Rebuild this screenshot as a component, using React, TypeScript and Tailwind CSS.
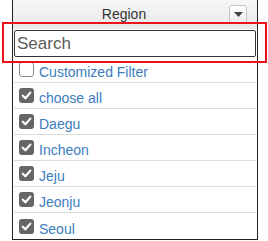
import React from "react";

const regions = [
  { label: "Customized Filter", checked: false },
  { label: "choose all", checked: true },
  { label: "Daegu", checked: true },
  { label: "Incheon", checked: true },
  { label: "Jeju", checked: true },
  { label: "Jeonju", checked: true },
  { label: "Seoul", checked: true },
];

function Box({ checked }: { checked: boolean }) {
  if (!checked) {
    return <span className="block w-[15px] h-[15px] rounded-[3px] border border-[#8a8a8a] bg-white" />;
  }
  return (
    <span className="flex items-center justify-center w-[15px] h-[15px] rounded-[3px] bg-[#666]">
      <svg width="11" height="11" viewBox="0 0 10 10">
        <path d="M1.6 5.2 L4 7.5 L8.5 2.4" fill="none" stroke="#fff" strokeWidth="2" strokeLinecap="round" strokeLinejoin="round" />
      </svg>
    </span>
  );
}

export default function App() {
  return (
    <div className="relative w-[268px] h-[241px] bg-white overflow-hidden font-['Liberation_Sans',Arial,sans-serif]">
      <div className="ml-[12px] w-[246px] h-[240px] border-x border-b border-[#222] flex flex-col">
        {/* header */}
        <div className="h-[30px] flex items-center bg-gradient-to-b from-[#f7f7f7] to-[#e9e9e9]">
          <div className="flex-1 text-center text-[14px] text-[#333] pl-[6px]">Region</div>
          <div className="mr-[10px] w-[18px] h-[19px] rounded-[3px] border border-[#c4c4c4] bg-gradient-to-b from-white to-[#ececec] flex items-center justify-center">
            <svg width="9" height="5" viewBox="0 0 9 5">
              <path d="M0 0 H9 L4.5 5 Z" fill="#444" />
            </svg>
          </div>
        </div>

        {/* search */}
        <div className="px-[1px] pt-[1px] h-[28px]">
          <div className="h-[27px] border border-[#333] rounded-[2px] flex items-center px-[2px] text-[17px] text-[#5a5a5a]">
            Search
          </div>
        </div>

        {/* list */}
        <div className="flex flex-col px-[1px]">
          {regions.map((r, i) => (
            <div
              key={r.label}
              className={`h-[26px] flex items-center gap-[5px] pl-[5px] ${i < regions.length - 1 ? "border-b border-[#dcdcdc]" : ""}`}
            >
              <Box checked={r.checked} />
              <span className="text-[14px] text-[#3b7dbd] leading-none pt-[5px]">{r.label}</span>
            </div>
          ))}
        </div>
      </div>

      {/* highlight overlay */}
      <div className="absolute left-[2px] top-[22px] w-[265px] h-[41px] border-2 border-[#e8141a] pointer-events-none" />
    </div>
  );
}
